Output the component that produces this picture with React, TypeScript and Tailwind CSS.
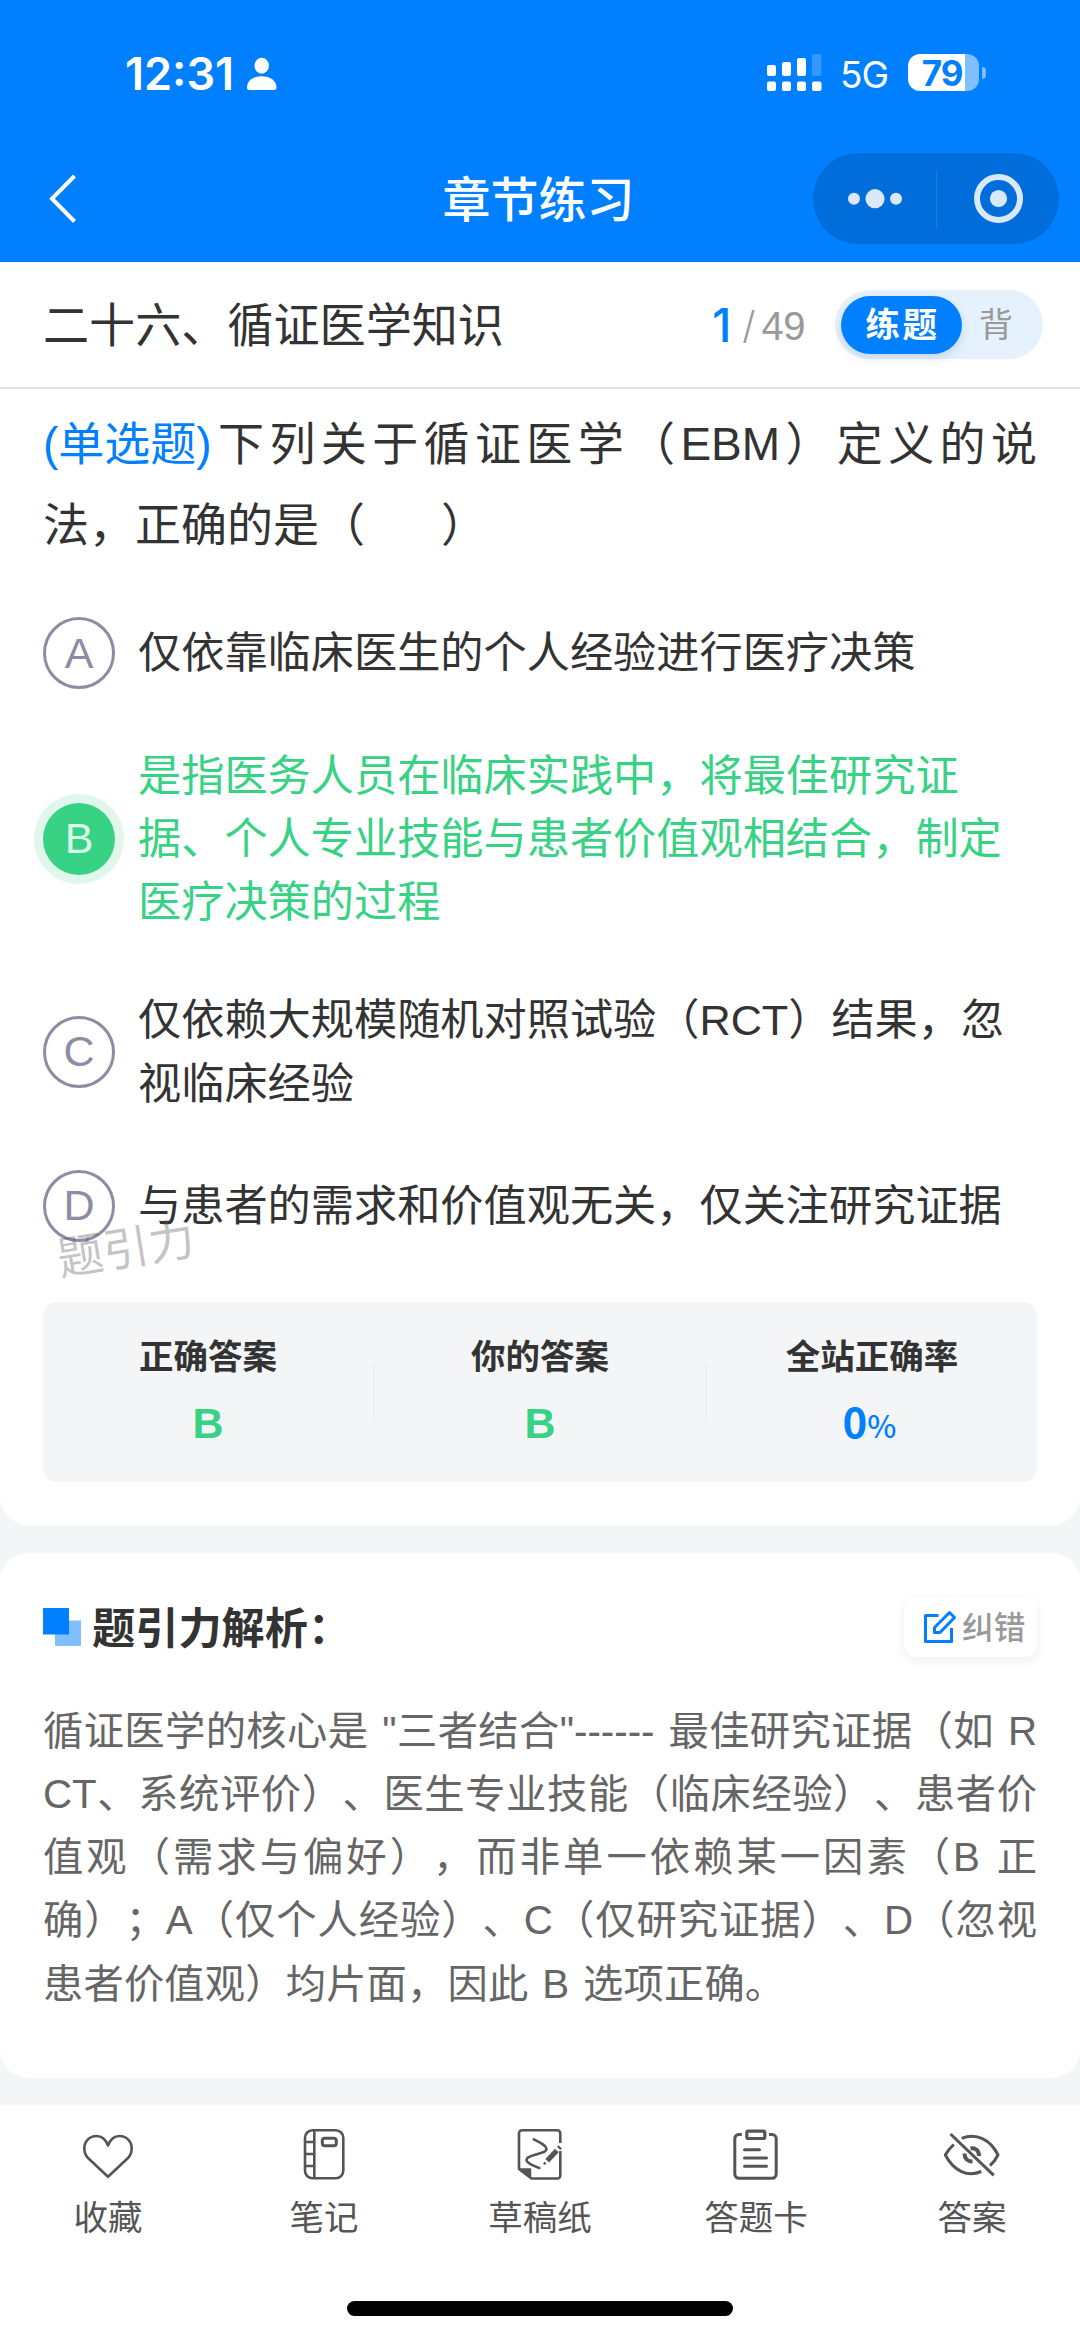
import type { ReactNode } from "react";

function StatusBar() {
  return (
    <div className="flex h-[146px] items-start pl-[125px] pr-[94px] pt-[52px] font-['Inter',sans-serif] text-white">
      <span className="w-[109px] whitespace-nowrap text-[45px] font-semibold leading-[44px]">12:31</span>
      <svg className="ml-[12px] mt-[5px] h-[34px] w-[32px]" viewBox="0 0 32 34" fill="currentColor">
        <ellipse cx="15.7" cy="8.7" rx="7.2" ry="8" />
        <path d="M1 30.5C1 23.5 7.5 19.2 15.7 19.2S30.5 23.5 30.5 30.5C30.5 32.2 29.7 33 28 33H3.5C1.8 33 1 32.2 1 30.5Z" />
      </svg>
      <div className="flex-1" />
      <svg className="mt-[1px] h-[40px] w-[56px]" viewBox="0 0 56 40" fill="currentColor">
        <rect x="0" y="12" width="9" height="11" rx="2" />
        <rect x="15" y="9" width="9" height="14" rx="2" />
        <rect x="30" y="5" width="9" height="18" rx="2" />
        <rect x="45" y="1" width="9.5" height="22" rx="2" opacity=".2" />
        <rect x="0" y="28.500" width="9" height="9.500" rx="2" />
        <rect x="15" y="28.500" width="9" height="9.500" rx="2" />
        <rect x="30" y="28.500" width="9" height="9.500" rx="2" />
        <rect x="45" y="28.500" width="9.500" height="9.500" rx="2" />
      </svg>
      <span className="ml-[17px] mt-[1px] w-[51px] whitespace-nowrap text-[37px] leading-[44px] tracking-[-1px]">5G</span>
      <div className="ml-[17px] mt-[2px] flex h-[37px] w-[71px] justify-center rounded-[12px] bg-[linear-gradient(90deg,#fff_57px,#80bfff_57px)] pr-[3px]">
        <span className="-mt-[3px] text-[35px] font-bold leading-[44px] tracking-[-1px] text-[#0080ff]">79</span>
      </div>
      <div className="ml-[3px] mt-[15px] h-[12px] w-[4px] rounded-r-full bg-[#80bfff]" />
    </div>
  );
}

function NavBar() {
  return (
    <div className="relative flex h-[116px] items-start justify-between pl-[46px] pr-[21px] pt-[7px]">
      <svg className="mt-[20px] h-[52px] w-[32px]" viewBox="0 0 32 52" fill="none" stroke="#fff" strokeWidth="4">
        <path d="M28.500 3L6 25.700L28.500 48.500" />
      </svg>
      <div className="absolute left-0 right-[3px] top-[20px] text-center font-['Noto_Sans_CJK_SC',sans-serif] text-[48px] font-medium leading-[60px] text-white">
        章节练习
      </div>
      <div className="flex h-[91px] w-[246px] items-center rounded-full bg-[#006dda]">
        <svg className="h-[91px] w-[246px]" viewBox="0 0 246 91" fill="#d9e9fb">
          <circle cx="41" cy="45.700" r="6" />
          <circle cx="62" cy="45.700" r="9.600" />
          <circle cx="83" cy="45.700" r="6" />
          <rect x="123" y="17" width="1.200" height="58" fill="#1a7de2" />
          <circle cx="185.500" cy="45.500" r="21.500" fill="none" stroke="#d9e9fb" strokeWidth="6" />
          <circle cx="185.500" cy="45.500" r="8.600" />
        </svg>
      </div>
    </div>
  );
}

function ChapterBar() {
  return (
    <div className="flex h-[127px] items-center border-b-2 border-[#e4e4e4] bg-white pl-[43px] pr-[37px]">
      <span className="flex-1 pt-[3px] text-[46.100px] leading-[60px] text-[#333]">二十六、循证医学知识</span>
      <span className="mr-[11px] font-['Inter',sans-serif] text-[46px] font-medium leading-[60px] text-[#0080ff]">1</span>
      <span className="font-['Inter',sans-serif] text-[38px] font-light leading-[60px] text-[#999]">/</span>
      <span className="ml-[6px] pt-[2px] text-[40px] leading-[60px] tracking-[-0.500px] text-[#999]">49</span>
      <div className="ml-[30px] flex h-[69px] w-[208px] items-center rounded-full bg-[#e5f1fd] pl-[6px]">
        <span className="flex h-[58px] w-[121px] items-center justify-center rounded-full bg-[#0080ff] pl-[2px] pt-[2px] text-[34.500px] font-bold tracking-[2.500px] text-white shadow-[0_4px_10px_rgba(0,60,120,0.15)]">
          练题
        </span>
        <span className="ml-[17px] pt-[2px] text-[34px] text-[#999]">背</span>
      </div>
    </div>
  );
}

function Option({ letter, lines, correct = false }: { letter: string; lines: string[]; correct?: boolean }) {
  return (
    <div className="flex items-center">
      <span
        className={
          correct
            ? "flex size-[72px] shrink-0 items-center justify-center rounded-full bg-[#38d284] text-[43px] text-[#dcfbe9] shadow-[0_0_0_9px_#e1f7ec]"
            : "flex size-[72px] shrink-0 items-center justify-center rounded-full border-[3px] border-[#8c8ca3] text-[43px] text-[#8c8ca3]"
        }
      >
        {letter}
      </span>
      <div
        className={
          correct
            ? "-mb-[1px] ml-[23px] mt-[1px] text-[43.200px] leading-[63.300px] text-[#38d284]"
            : "-mb-[1px] ml-[23px] mt-[1px] text-[43.200px] leading-[63.300px] text-[#333]"
        }
      >
        {lines.map((l) => (
          <div key={l} className="whitespace-nowrap">{l}</div>
        ))}
      </div>
    </div>
  );
}

function Stat({ label, children }: { label: string; children: ReactNode }) {
  return (
    <div className="flex flex-1 flex-col items-center">
      <span className="text-[34.500px] font-bold leading-[50px] text-[#333]">{label}</span>
      <span className="mt-[16px] h-[50px] text-[43px] font-bold leading-[50px]">{children}</span>
    </div>
  );
}

function QuestionCard() {
  return (
    <section className="relative h-[1136px] rounded-b-[28px] bg-white px-[43px] pt-[15px]">
      <div className="text-[46px] leading-[81px] text-[#333]">
        <div className="whitespace-nowrap [text-align-last:justify]">
          <span className="mr-[1px] inline-block text-[#0080ff] [text-align-last:left]">(单选题)</span>
          下列关于循证医学（EBM）定义的说
        </div>
        <div className="whitespace-nowrap">
          法，正确的是（<span className="inline-block w-[76px]" />）
        </div>
      </div>
      <div className="mt-[51px] flex flex-col gap-[54.700px]">
        <Option letter="A" lines={["仅依靠临床医生的个人经验进行医疗决策"]} />
        <Option letter="B" correct lines={["是指医务人员在临床实践中，将最佳研究证", "据、个人专业技能与患者价值观相结合，制定", "医疗决策的过程"]} />
        <Option letter="C" lines={["仅依赖大规模随机对照试验（RCT）结果，忽", "视临床经验"]} />
        <Option letter="D" lines={["与患者的需求和价值观无关，仅关注研究证据"]} />
      </div>
      <div className="absolute left-[57px] top-[830px] -rotate-[9deg] text-[46px] leading-[60px] text-[#555]/35">题引力</div>
      <div className="mt-[60.500px] flex h-[180px] items-start rounded-[14px] bg-[#f3f5f7] pt-[30px]">
        <Stat label="正确答案">
          <span className="text-[#38d284]">B</span>
        </Stat>
        <div className="mt-[32px] h-[58px] w-[2px] bg-[#eceff1]" />
        <Stat label="你的答案">
          <span className="text-[#38d284]">B</span>
        </Stat>
        <div className="mt-[32px] h-[58px] w-[2px] bg-[#eceff1]" />
        <Stat label="全站正确率">
          <span className="-mt-[3px] block pr-[5px] font-['Noto_Sans_CJK_SC',sans-serif] text-[42px] text-[#0080ff]">
            0<span className="text-[31px] font-medium">%</span>
          </span>
        </Stat>
      </div>
    </section>
  );
}

const analysis = [
  '循证医学的核心是 "三者结合"------ 最佳研究证据（如 R',
  "CT、系统评价）、医生专业技能（临床经验）、患者价",
  "值观（需求与偏好），而非单一依赖某一因素（B 正",
  "确）；A（仅个人经验）、C（仅研究证据）、D（忽视",
];

function AnalysisCard() {
  return (
    <section className="mt-[28px] h-[525px] rounded-[28px] bg-white px-[43px] pt-[44px]">
      <div className="flex h-[60px] items-center">
        <svg className="h-[38px] w-[38px]" viewBox="0 0 38 38">
          <rect x="12" y="12.500" width="26" height="25.500" fill="#80bfff" />
          <rect width="26" height="26.500" fill="#0080ff" />
        </svg>
        <span className="-mt-[4px] ml-[11px] flex-1 font-['Noto_Sans_CJK_SC',sans-serif] text-[43.200px] font-bold leading-[60px] text-[#333]">题引力解析：</span>
        <div className="flex h-[60px] w-[133px] items-center rounded-[12px] bg-white pl-[19px] shadow-[0_3px_12px_rgba(0,0,0,0.07)]">
          <svg className="h-[34px] w-[34px]" viewBox="0 0 34 34" fill="none" stroke="#0080ff" strokeWidth="3">
            <path d="M15.500 5.500H2.500V31.500H28.500V18" strokeLinejoin="round" />
            <path d="M26.500 2.500L31.500 7.500L17 22.500L11.500 22.500L11.500 17.500Z" strokeLinejoin="round" />
          </svg>
          <span className="ml-[5px] whitespace-nowrap pt-[3px] text-[31.700px] font-medium text-[#999]">纠错</span>
        </div>
      </div>
      <div className="mt-[42.500px] text-[40.300px] leading-[63.300px] text-[#666] [word-spacing:2.500px]">
        {analysis.map((l) => (
          <div key={l} className="whitespace-nowrap [text-align-last:justify]">{l}</div>
        ))}
        <div className="tracking-[0.150px]">患者价值观）均片面，因此 B 选项正确。</div>
      </div>
    </section>
  );
}

function Tab({ label, children }: { label: string; children: ReactNode }) {
  return (
    <div className="flex flex-1 flex-col items-center text-[#555]">
      <svg className="size-[60px]" viewBox="0 0 60 60" fill="none" stroke="currentColor" strokeWidth="2.600" strokeLinejoin="round">
        {children}
      </svg>
      <span className="mt-[9px] text-[34.500px] leading-[50px]">{label}</span>
    </div>
  );
}

function BottomBar() {
  return (
    <footer className="mt-[27px] h-[234px] bg-white pt-[19px]">
      <div className="flex">
        <Tab label="收藏">
          <path d="M30 21.500C27.500 15 23 12 18.500 12C11.500 12 6.300 17.600 6.300 24.500C6.300 28.500 7.600 31.500 10 34L30 52.800L50 34C52.400 31.500 53.700 28.500 53.700 24.500C53.700 17.600 48.500 12 41.500 12C37 12 32.500 15 30 21.500Z" />
        </Tab>
        <Tab label="笔记">
          <rect x="11" y="6.300" width="38.300" height="48" rx="7.500" />
          <path d="M20.300 6.300V54.300M11 18H20.300M11 30H20.300M11 42H20.300" />
          <rect x="28.300" y="14.200" width="14" height="7.500" rx="2.500" strokeWidth="3" />
        </Tab>
        <Tab label="草稿纸">
          <path d="M50.300 19V9.300A3 3 0 0 0 47.300 6.300H12A3 3 0 0 0 9 9.300V45L21.500 54.500H47.300A3 3 0 0 0 50.300 51.500V27" />
          <path d="M9 45H20.500V54Z" fill="currentColor" strokeWidth="1.500" />
          <path d="M23.700 15.300C30 18.500 36.300 21 36.500 25C36.700 29.500 26 29 18 33.500C14.500 36.500 17 39.500 29.300 44" strokeLinecap="round" />
          <path d="M37.200 36.700L46.800 26.500" strokeWidth="5.200" />
          <path d="M48.700 24.500L50.200 22.900" strokeWidth="4.600" />
          <circle cx="34.700" cy="39.400" r="1.300" fill="currentColor" stroke="none" />
        </Tab>
        <Tab label="答题卡">
          <path d="M15.800 10.600H12.600A4 4 0 0 0 8.800 14.600V50.300A4 4 0 0 0 12.800 54.200H46.200A4 4 0 0 0 50.200 50.300V14.600A4 4 0 0 0 46.200 10.600H43" strokeWidth="3" />
          <rect x="20.800" y="7.200" width="18" height="7.300" rx="1.500" strokeWidth="3.200" />
          <path d="M18.500 25.700H33.500M18.500 34H40.500M18.500 42.300H40.500" strokeWidth="3" strokeLinecap="round" />
        </Tab>
        <Tab label="答案">
          <path d="M8.500 10L51.800 51.300" strokeWidth="3" />
          <path d="M19.700 14.400C34 8.500 48.500 15.500 56 31C53.500 36 51 39 48 41.500" strokeWidth="3" />
          <path d="M11.800 20.500C8.500 23.500 5.700 26.500 3.300 31C11.500 46.500 25 53.500 39.300 47.500" strokeWidth="3" />
          <path d="M28.500 24.500C33.500 23.500 37 26.500 37 32" strokeWidth="4" />
          <path d="M22.500 29.500C22.500 34.500 25.500 37.500 30.500 37.500" strokeWidth="4" />
        </Tab>
      </div>
      <div className="mx-auto mt-[58px] h-[15px] w-[386px] rounded-full bg-black" />
    </footer>
  );
}

export default function App() {
  return (
    <main className="h-[2339px] w-[1080px] overflow-hidden bg-[#f3f5f7] font-['Liberation_Sans','Noto_Sans_CJK_SC',sans-serif] [text-spacing-trim:space-all]">
      <header className="bg-[#0080ff]">
        <StatusBar />
        <NavBar />
      </header>
      <ChapterBar />
      <QuestionCard />
      <AnalysisCard />
      <BottomBar />
    </main>
  );
}
